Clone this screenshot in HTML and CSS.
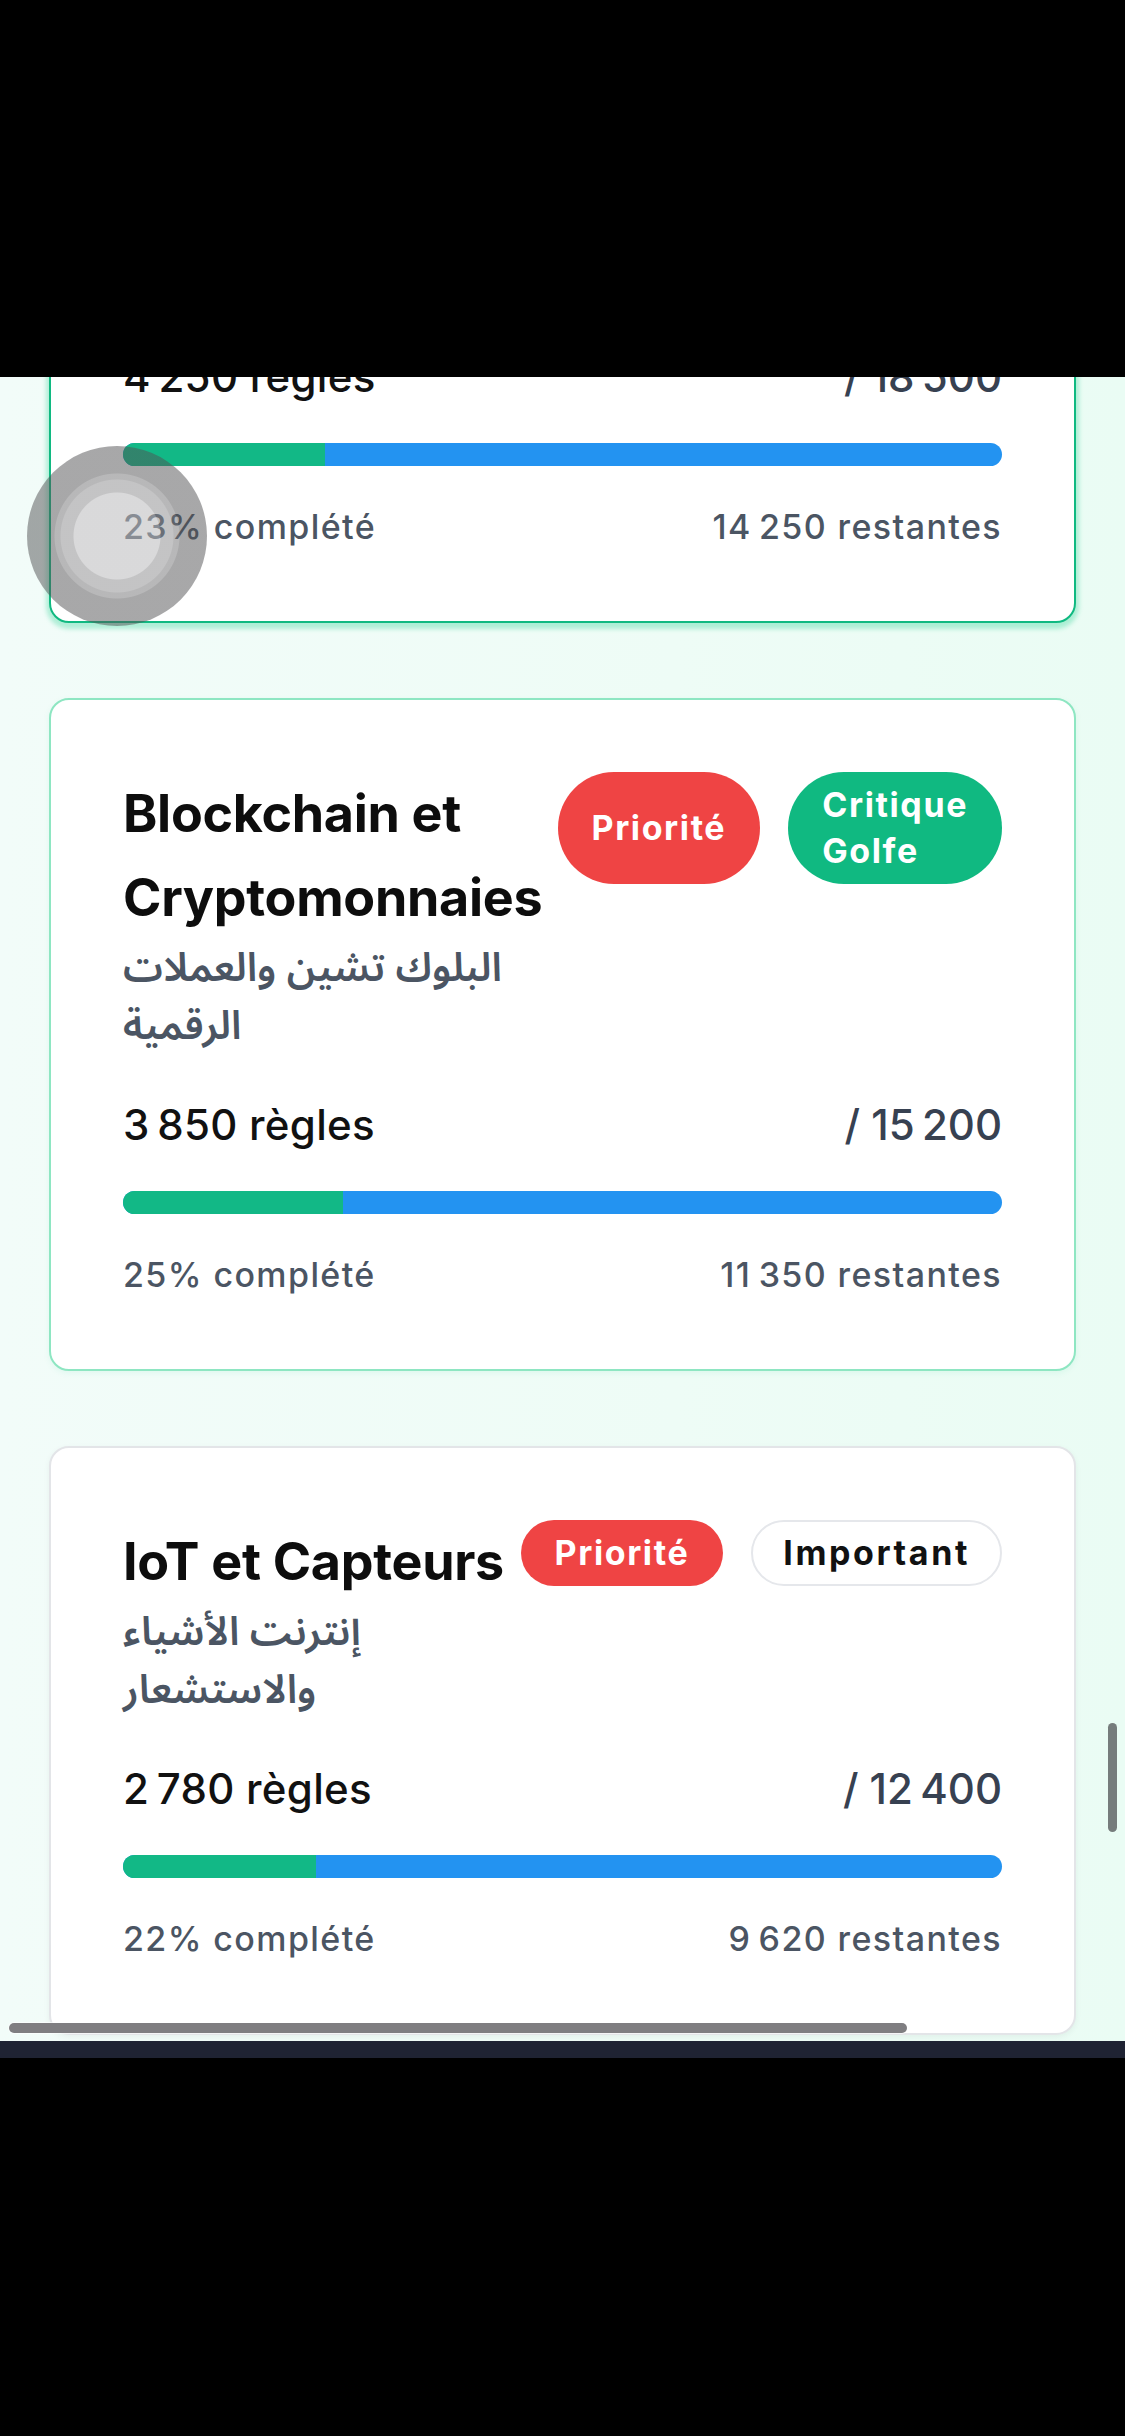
FILE: index.html
```html
<!DOCTYPE html>
<html lang="fr">
<head>
<meta charset="utf-8">
<title>Règles</title>
<link rel="stylesheet" href="styles.css">
</head>
<body>
<div class="screen">
  <div class="topbar"></div>
  <div class="viewport">
    <div class="list">
      <section class="card card-active">
        <div class="stats"><span class="count">4&#8239;250 règles</span><span class="total">/ 18&#8239;500</span></div>
        <div class="bar"><div class="fill" style="width:23%"></div></div>
        <div class="foot"><span>23% complété</span><span>14&#8239;250 restantes</span></div>
      </section>

      <section class="card card-green">
        <div class="head">
          <div class="titles">
            <h2 class="title">Blockchain et Cryptomonnaies</h2>
            <p class="ar">البلوك تشين والعملات الرقمية</p>
          </div>
          <div class="badges">
            <span class="pill pill-red">Priorité</span>
            <span class="pill pill-green">Critique Golfe</span>
          </div>
        </div>
        <div class="stats"><span class="count">3&#8239;850 règles</span><span class="total">/ 15&#8239;200</span></div>
        <div class="bar"><div class="fill" style="width:25%"></div></div>
        <div class="foot"><span>25% complété</span><span>11&#8239;350 restantes</span></div>
      </section>

      <section class="card card-plain">
        <div class="head">
          <div class="titles">
            <h2 class="title">IoT et Capteurs</h2>
            <p class="ar">إنترنت الأشياء والاستشعار</p>
          </div>
          <div class="badges">
            <span class="pill pill-red">Priorité</span>
            <span class="pill pill-white">Important</span>
          </div>
        </div>
        <div class="stats"><span class="count">2&#8239;780 règles</span><span class="total">/ 12&#8239;400</span></div>
        <div class="bar"><div class="fill" style="width:22%"></div></div>
        <div class="foot"><span>22% complété</span><span>9&#8239;620 restantes</span></div>
      </section>
    </div>

    <div class="touch"></div>
    <div class="vscroll"></div>
    <div class="hscroll"></div>
  </div>
  <div class="navstrip"></div>
  <div class="bottom"></div>
</div>
</body>
</html>
```

FILE: styles.css
```css
* { box-sizing: border-box; }
html, body { margin: 0; padding: 0; background: #000; }
body { font-family: Inter, "Liberation Sans", sans-serif; color: #111; }

.screen {
  width: 1125px;
  height: 2436px;
  display: flex;
  flex-direction: column;
  overflow: hidden;
}
.topbar { height: 377px; background: #000; flex: none; }
.viewport {
  position: relative;
  height: 1664px;
  flex: none;
  overflow: hidden;
  background: linear-gradient(90deg, #f2fcf9 0%, #eefcf6 60%, #eafcf4 100%);
}
.navstrip { height: 17px; background: #1f2333; flex: none; }
.bottom { flex: 1; background: #000; }

.list {
  margin-top: -102px;
  padding: 0 49px;
  display: flex;
  flex-direction: column;
  gap: 75px;
}

.card {
  background: #fff;
  border: 2px solid #e5e7eb;
  border-radius: 20px;
  padding: 72px;
}
.card-active {
  border-color: #10b981;
  box-shadow: 0 3px 4px 3px rgba(52, 211, 153, 0.35);
}
.card-green {
  border-color: #8ee6c2;
  box-shadow: 0 2px 6px rgba(16, 185, 129, 0.08);
}
.card-plain {
  border-color: #e3e5e8;
  box-shadow: 0 2px 6px rgba(0, 0, 0, 0.05);
}

.head {
  display: flex;
  align-items: flex-start;
  gap: 6px;
}
.titles { flex: 1 1 auto; min-width: 0; }
.title {
  margin: 0;
  font-size: 52px;
  line-height: 84px;
  font-weight: 700;
  letter-spacing: -0.3px;
  color: #0d0d0d;
}
.ar {
  margin: 0;
  font-family: "Noto Sans Arabic", "DejaVu Sans", sans-serif;
  font-size: 40px;
  line-height: 58px;
  font-weight: 600;
  color: #4b5563;
}

.badges {
  flex: 0 1 auto;
  display: flex;
  gap: 28px;
}
.pill {
  display: flex;
  align-items: center;
  padding: 10px 32px;
  border-radius: 999px;
  font-size: 34px;
  line-height: 46px;
  font-weight: 700;
  letter-spacing: 1.6px;
  color: #fff;
}
.pill-red { background: #ef4444; padding: 10px 34px; }
.pill-green { background: #10b981; padding: 10px 34px; }
.pill-white {
  background: #fff;
  color: #111;
  border: 2px solid #e5e7eb;
  padding: 8px 30px;
  letter-spacing: 2.6px;
}

.stats {
  margin-top: 41px;
  display: flex;
  justify-content: space-between;
  font-size: 42px;
  line-height: 56px;
  font-weight: 500;
  letter-spacing: 0.3px;
}
.card-active .stats { margin-top: 0; }
.count { color: #111; }
.total { color: #374151; }

.bar {
  margin-top: 38px;
  height: 23px;
  border-radius: 999px;
  background: #2393f1;
  overflow: hidden;
}
.fill { height: 100%; background: #12b886; }

.foot {
  margin-top: 38px;
  display: flex;
  justify-content: space-between;
  font-size: 34px;
  line-height: 45px;
  font-weight: 500;
  letter-spacing: 1.4px;
  color: #4b5563;
}

.touch {
  position: absolute;
  left: 27px;
  top: 69px;
  width: 180px;
  height: 180px;
  border-radius: 50%;
  background: radial-gradient(circle closest-side,
    rgba(186, 186, 188, 0.55) 0 43px,
    rgba(137, 137, 139, 0.5) 44px 56px,
    rgba(113, 113, 115, 0.5) 57px 62px,
    rgba(81, 81, 83, 0.5) 63px 90px);
}

.vscroll {
  position: absolute;
  left: 1108px;
  top: 1346px;
  width: 9px;
  height: 109px;
  border-radius: 5px;
  background: #767c7c;
}
.hscroll {
  position: absolute;
  left: 9px;
  top: 1646px;
  width: 898px;
  height: 10px;
  border-radius: 5px;
  background: #7f7e81;
  box-shadow: 0 0 0 1px rgba(255, 255, 255, 0.6);
}
```
